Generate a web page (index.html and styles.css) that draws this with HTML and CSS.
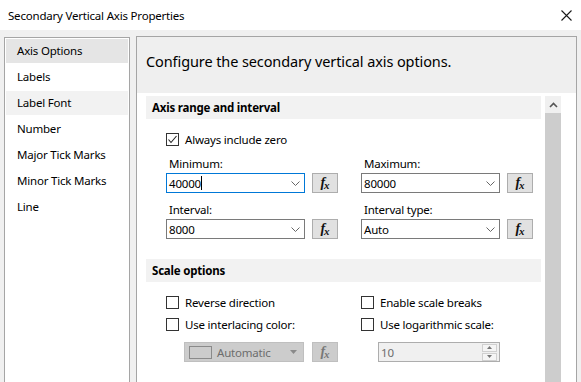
FILE: index.html
```html
<!DOCTYPE html>
<html lang="en">
<head>
  <meta charset="UTF-8">
  <title>Secondary Vertical Axis Properties</title>
  <link rel="stylesheet" href="styles.css">
</head>
<body>
  <div class="titlebar">
    <span class="title">Secondary Vertical Axis Properties</span>
    <svg class="close" width="11" height="11" viewBox="0 0 11 11"><path d="M0.5 0.5L10.5 10.5M10.5 0.5L0.5 10.5" stroke="#1a1a1a" stroke-width="1.1" fill="none"/></svg>
  </div>

  <div class="main">
    <!-- lista de paginas -->
    <ul class="nav">
      <li class="selected">Axis Options</li>
      <li>Labels</li>
      <li class="hover">Label Font</li>
      <li>Number</li>
      <li>Major Tick Marks</li>
      <li>Minor Tick Marks</li>
      <li>Line</li>
    </ul>

    <div class="panel">
      <div class="panel-head">Configure the secondary vertical axis options.</div>
      <div class="panel-body">
        <div class="sections">
          <div class="section-title">Axis range and interval</div>
          <div class="section-body">
            <div class="check">
              <span class="box"><svg width="11" height="11" viewBox="0 0 11 11"><path d="M1.5 5.5L4 8.5L9.5 2" stroke="#222" stroke-width="1.1" fill="none"/></svg></span>
              Always include zero
            </div>
            <div class="fields">
              <div class="field">
                <div class="field-label">Minimum:</div>
                <div class="field-row">
                  <div class="combo focus"><span class="val">40000<span class="caret"></span></span><svg width="9" height="5" viewBox="0 0 9 5"><path d="M0.5 0.5L4.5 4.5L8.5 0.5" stroke="#666" fill="none"/></svg></div>
                  <span class="fx"><i>f</i><i class="x">x</i></span>
                </div>
              </div>
              <div class="field">
                <div class="field-label">Maximum:</div>
                <div class="field-row">
                  <div class="combo"><span class="val">80000</span><svg width="9" height="5" viewBox="0 0 9 5"><path d="M0.5 0.5L4.5 4.5L8.5 0.5" stroke="#666" fill="none"/></svg></div>
                  <span class="fx"><i>f</i><i class="x">x</i></span>
                </div>
              </div>
              <div class="field">
                <div class="field-label">Interval:</div>
                <div class="field-row">
                  <div class="combo"><span class="val">8000</span><svg width="9" height="5" viewBox="0 0 9 5"><path d="M0.5 0.5L4.5 4.5L8.5 0.5" stroke="#666" fill="none"/></svg></div>
                  <span class="fx"><i>f</i><i class="x">x</i></span>
                </div>
              </div>
              <div class="field">
                <div class="field-label">Interval type:</div>
                <div class="field-row">
                  <div class="combo"><span class="val">Auto</span><svg width="9" height="5" viewBox="0 0 9 5"><path d="M0.5 0.5L4.5 4.5L8.5 0.5" stroke="#666" fill="none"/></svg></div>
                  <span class="fx"><i>f</i><i class="x">x</i></span>
                </div>
              </div>
            </div>
          </div>

          <div class="section-title">Scale options</div>
          <div class="section-body scale">
            <div class="checks">
              <div class="check"><span class="box"></span>Reverse direction</div>
              <div class="check"><span class="box"></span>Enable scale breaks</div>
              <div class="check"><span class="box"></span>Use interlacing color:</div>
              <div class="check"><span class="box"></span>Use logarithmic scale:</div>
              <div class="sub-row">
                <div class="color-drop">
                  <span class="swatch"></span>
                  <span class="val">Automatic</span>
                  <svg width="7" height="4" viewBox="0 0 7 4"><path d="M0 0H7L3.5 4Z" fill="#8a8a8a"/></svg>
                </div>
                <span class="fx disabled"><i>f</i><i class="x">x</i></span>
              </div>
              <div class="sub-row">
                <div class="spin">
                  <span class="val">10</span>
                  <span class="spin-btns">
                    <span><svg width="5" height="3" viewBox="0 0 5 3"><path d="M0 3H5L2.5 0Z" fill="#777"/></svg></span>
                    <span><svg width="5" height="3" viewBox="0 0 5 3"><path d="M0 0H5L2.5 3Z" fill="#777"/></svg></span>
                  </span>
                </div>
              </div>
            </div>
          </div>
        </div>

        <div class="scrollbar">
          <div class="sb-up"><svg width="9" height="6" viewBox="0 0 9 6"><path d="M1 5L4.5 1.5L8 5" stroke="#555" stroke-width="1.6" fill="none"/></svg></div>
          <div class="sb-thumb"></div>
        </div>
      </div>
    </div>
  </div>
</body>
</html>
```

FILE: styles.css
```css
body {
  margin: 0;
  width: 581px;
  height: 382px;
  overflow: hidden;
  font-family: "Noto Sans", sans-serif;
  font-size: 11.5px;
  letter-spacing: -0.2px;
  color: #000;
  background-color: #f0f0f0;
}
.titlebar {
  height: 30px;
  background: #fff;
  display: flex;
  align-items: center;
  justify-content: space-between;
  padding: 0 9px 0 8px;
}
.main {
  display: flex;
  gap: 6px;
  padding: 6px 0 0 4px;
  height: 346px;
  overflow: hidden;
}
.nav {
  list-style: none;
  margin: 1px 0 0 0;
  padding: 1px;
  width: 122px;
  height: 360px;
  flex: none;
  background: #fff;
  border: 1px solid #a5a5a5;
  display: flex;
  flex-direction: column;
  gap: 2px;
}
.nav li {
  height: 24px;
  line-height: 24px;
  padding-left: 11px;
}
.nav li.selected {
  background: #e5e5e5;
}
.nav li.hover {
  background: #f2f2f2;
}
.panel {
  width: 439px;
  height: 360px;
  flex: none;
  border: 1px solid #a5a5a5;
  background: #fff;
  display: flex;
  flex-direction: column;
}
.panel-head {
  height: 56px;
  background: #efefef;
  font-size: 14.5px;
  letter-spacing: -0.1px;
  line-height: 48px;
  padding-left: 9px;
}
.panel-body {
  flex: 1;
  display: flex;
  gap: 4px;
  padding: 3px 0 0 9px;
}
.sections {
  width: 395px;
}
.section-title {
  height: 23px;
  line-height: 23px;
  background: #f2f2f2;
  font-weight: bold;
  padding-left: 6px;
}
.section-body {
  padding: 14px 0 20px 20px;
}
.check {
  display: flex;
  align-items: center;
  gap: 6px;
  height: 13px;
  line-height: 13px;
}
.box {
  width: 11px;
  height: 11px;
  border: 1px solid #333;
  background: #fff;
  display: flex;
  flex: none;
}
.fields {
  display: grid;
  grid-template-columns: 195px 172px;
  row-gap: 9px;
  margin-top: 10px;
}
.field-label {
  height: 16px;
  line-height: 16px;
  margin-bottom: 1px;
  padding-left: 3px;
}
.field-row {
  display: flex;
  gap: 7px;
}
.combo {
  height: 18px;
  border: 1px solid #7a7a7a;
  background: #fff;
  display: flex;
  align-items: center;
  justify-content: space-between;
  padding: 0 4px 0 2px;
  width: 131px;
}
.combo.focus {
  border-color: #0078d7;
}
.val {
  display: flex;
  align-items: center;
}
.caret {
  width: 1px;
  height: 14px;
  background: #000;
}
.fx {
  width: 24px;
  height: 18px;
  border: 1px solid #adadad;
  background: #e1e1e1;
  display: flex;
  align-items: center;
  justify-content: center;
  font-family: "Liberation Serif", serif;
  font-weight: bold;
  font-size: 14px;
  letter-spacing: 0;
  color: #111;
}
.fx i {
  line-height: 1;
}
.fx .x {
  font-size: 11px;
  margin-top: 4px;
  margin-left: -1px;
}
.fx.disabled {
  background: #cccccc;
  border-color: #bfbfbf;
  color: #777;
}
.checks {
  display: grid;
  grid-template-columns: 195px 172px;
  row-gap: 9px;
}
.sub-row {
  display: flex;
  gap: 8px;
  margin-top: 2px;
  padding-left: 18px;
}
.sub-row:last-child {
  padding-left: 17px;
}
.color-drop {
  height: 18px;
  background: #cccccc;
  border: 1px solid #bfbfbf;
  display: flex;
  align-items: center;
  gap: 5px;
  padding-left: 4px;
  width: 114px;
  color: #6d6d6d;
}
.color-drop svg {
  margin-left: auto;
  margin-right: 6px;
}
.swatch {
  width: 21px;
  height: 11px;
  border: 1px solid #8a8a8a;
}
.spin {
  height: 18px;
  background: #f0f0f0;
  border: 1px solid #adadad;
  display: flex;
  align-items: center;
  justify-content: space-between;
  color: #6d6d6d;
  padding-left: 2px;
  width: 118px;
}
.spin-btns {
  display: flex;
  flex-direction: column;
  gap: 1px;
  margin-right: 2px;
}
.spin-btns span {
  width: 13px;
  height: 6px;
  border: 1px solid #d0d0d0;
  background: #f5f5f5;
  display: flex;
  align-items: center;
  justify-content: center;
}
.scrollbar {
  width: 16px;
  background: #f0f0f0;
  display: flex;
  flex-direction: column;
}
.sb-up {
  height: 17px;
  display: flex;
  align-items: center;
  justify-content: center;
}
.sb-thumb {
  flex: 1;
  background: #cdcdcd;
}
```
